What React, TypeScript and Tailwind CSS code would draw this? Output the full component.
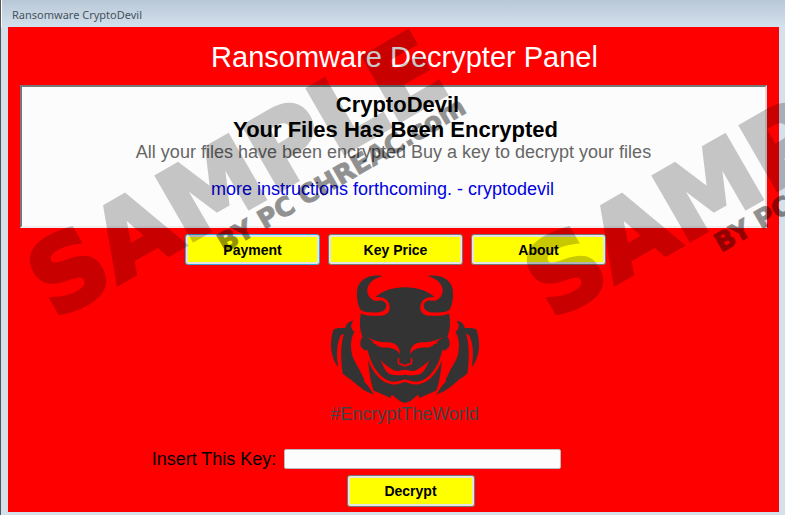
import React from "react";

function HalfMask() {
  return (
    <g>
      <path
        fill="#333"
        d="M284 65 C245 65 215 76 193 95 C212 92 236 100 237 125 C237 144 222 151 205 151 C185 151 168 152 150 144 C146 165 145 190 155 214 C147 224 147 240 151 246 L168 262 C174 300 176 345 188 376 L240 399 L243 389 C256 396 265 413 284 413 Z"
      />
      <path
        fill="#333"
        d="M215 31 C175 25 138 42 138 82 C138 105 142 122 149 133 C160 143 185 142 206 140 C226 138 233 118 220 108 C211 101 197 108 190 105 C160 92 158 46 215 31 Z"
      />
      <path
        fill="#333"
        d="M128 166 C114 167 105 175 103 188 C88 187 72 187 67 193 C60 215 58 238 61 256 C65 280 72 295 82 306 C75 268 77 230 91 208 L99 206 C89 235 88 280 95 325 C104 334 118 340 132 354 C150 370 168 383 189 388 C172 365 160 345 150 322 C138 298 126 285 122 262 C118 235 121 215 131 199 C118 192 118 176 128 166 Z"
      />
      <path
        fill="red"
        d="M166 214 C185 224 205 231 231 231 C257 232 267 246 268 267 C256 248 236 246 213 247 L194 240 L203 240 L182 232 L190 231 Z"
      />
      <path
        fill="red"
        d="M207 282 C220 298 243 312 252 316 C263 320 273 314 285 314 L285 328 C266 333 243 330 234 325 C220 314 217 298 207 282 Z"
      />
      <path
        fill="none"
        stroke="red"
        strokeWidth="8"
        d="M166 255 C178 305 207 350 246 354 C262 356 272 348 285 346"
      />
      <path
        fill="none"
        stroke="red"
        strokeWidth="5"
        d="M264 279 C260 294 266 299 273 297 C277 301 280 302 285 302"
      />
      <path fill="red" d="M166 262 C170 310 178 350 188 377 L160 350 Z" />
    </g>
  );
}

function DevilMask() {
  return (
    <svg
      viewBox="58 28 450 386"
      className="h-32 w-[150px]"
      role="img"
      aria-label="Horned mask"
    >
      <HalfMask />
      <g transform="translate(566 0) scale(-1 1)">
        <HalfMask />
      </g>
    </svg>
  );
}

function Stamp() {
  return (
    <>
      <g opacity="0.21">
        <text x="0" y="-2" fontSize="101" stroke="black" strokeWidth="4">
          SAMPLE
        </text>
      </g>
      <g opacity="0.42">
        <text x="180" y="24" fontSize="26" stroke="black" strokeWidth="1">
          BY PC CHREAC.com
        </text>
      </g>
    </>
  );
}

function Watermark() {
  return (
    <svg
      className="pointer-events-none absolute inset-0 h-full w-full font-['DejaVu_Sans',sans-serif] font-bold"
      aria-hidden="true"
    >
      <g transform="translate(55 322) rotate(-30)">
        <Stamp />
      </g>
      <g transform="translate(552 322) rotate(-30)">
        <Stamp />
      </g>
    </svg>
  );
}

function PanelButton({
  children,
  className,
}: {
  children: React.ReactNode;
  className: string;
}) {
  return (
    <button
      type="button"
      className={`rounded-[3px] border bg-[#ff0] text-sm font-bold text-black ring-2 ring-inset ring-[#e4e4e4] ${className}`}
    >
      {children}
    </button>
  );
}

export default function App() {
  return (
    <div className="relative flex min-h-screen flex-col overflow-hidden border-l border-[#555] bg-[#d4e0ec] font-['Liberation_Sans',Arial,sans-serif]">
      <header className="flex h-[27px] items-center border-l border-white bg-linear-to-b from-[#b9c8d7] to-[#d3e0ed] pt-1 pl-2.5 font-['Noto_Sans',sans-serif] text-[11px] text-[#46525c]">
        Ransomware CryptoDevil
      </header>
      <main className="mr-1.5 mb-[3px] ml-[7px] flex grow flex-col bg-[#f00] px-3">
        <h1 className="pt-[13px] pb-[11px] pl-[22px] text-center text-[29px] leading-[34px] text-white">
          Ransomware Decrypter Panel
        </h1>
        <section className="border-2 border-t-[#777] border-r-[#ddd] border-b-[#eee] border-l-[#777] bg-[#fcfcfc] pt-[5px] pb-[27px] text-center text-lg leading-5">
          <h2 className="pl-2 text-[22px] leading-[25px] font-bold">CryptoDevil</h2>
          <h2 className="pl-1 text-[22px] leading-[25px] font-bold">
            Your Files Has Been Encrypted
          </h2>
          <p className="text-[#666]">
            All your files have been encrypted Buy a key to decrypt your files
          </p>
          <p className="mt-[17px] pr-[22px] text-[#0000e0]">
            more instructions forthcoming. - cryptodevil
          </p>
        </section>
        <nav className="mt-1.5 flex justify-center gap-2 pl-1">
          <PanelButton className="h-[31px] w-[135px] border-[#35a5d5]">Payment</PanelButton>
          <PanelButton className="h-[31px] w-[135px] border-[#777]">Key Price</PanelButton>
          <PanelButton className="h-[31px] w-[135px] border-[#777]">About</PanelButton>
        </nav>
        <figure className="mt-2.5 flex flex-col items-center pl-[22px]">
          <DevilMask />
          <figcaption className="text-lg leading-[22px] text-[#444]">#EncryptTheWorld</figcaption>
        </figure>
        <form className="mt-6 flex flex-col items-center gap-1.5">
          <div className="flex items-center gap-2 pr-[74px]">
            <label htmlFor="key" className="text-lg leading-5">
              Insert This Key:
            </label>
            <input
              id="key"
              type="text"
              className="h-5 w-[277px] rounded-xs border border-[#bbb] bg-[#fcfcfc] px-1 text-sm"
            />
          </div>
          <div className="pl-[34px]">
            <PanelButton className="h-8 w-32 border-[#777]">Decrypt</PanelButton>
          </div>
        </form>
      </main>
      <Watermark />
    </div>
  );
}
